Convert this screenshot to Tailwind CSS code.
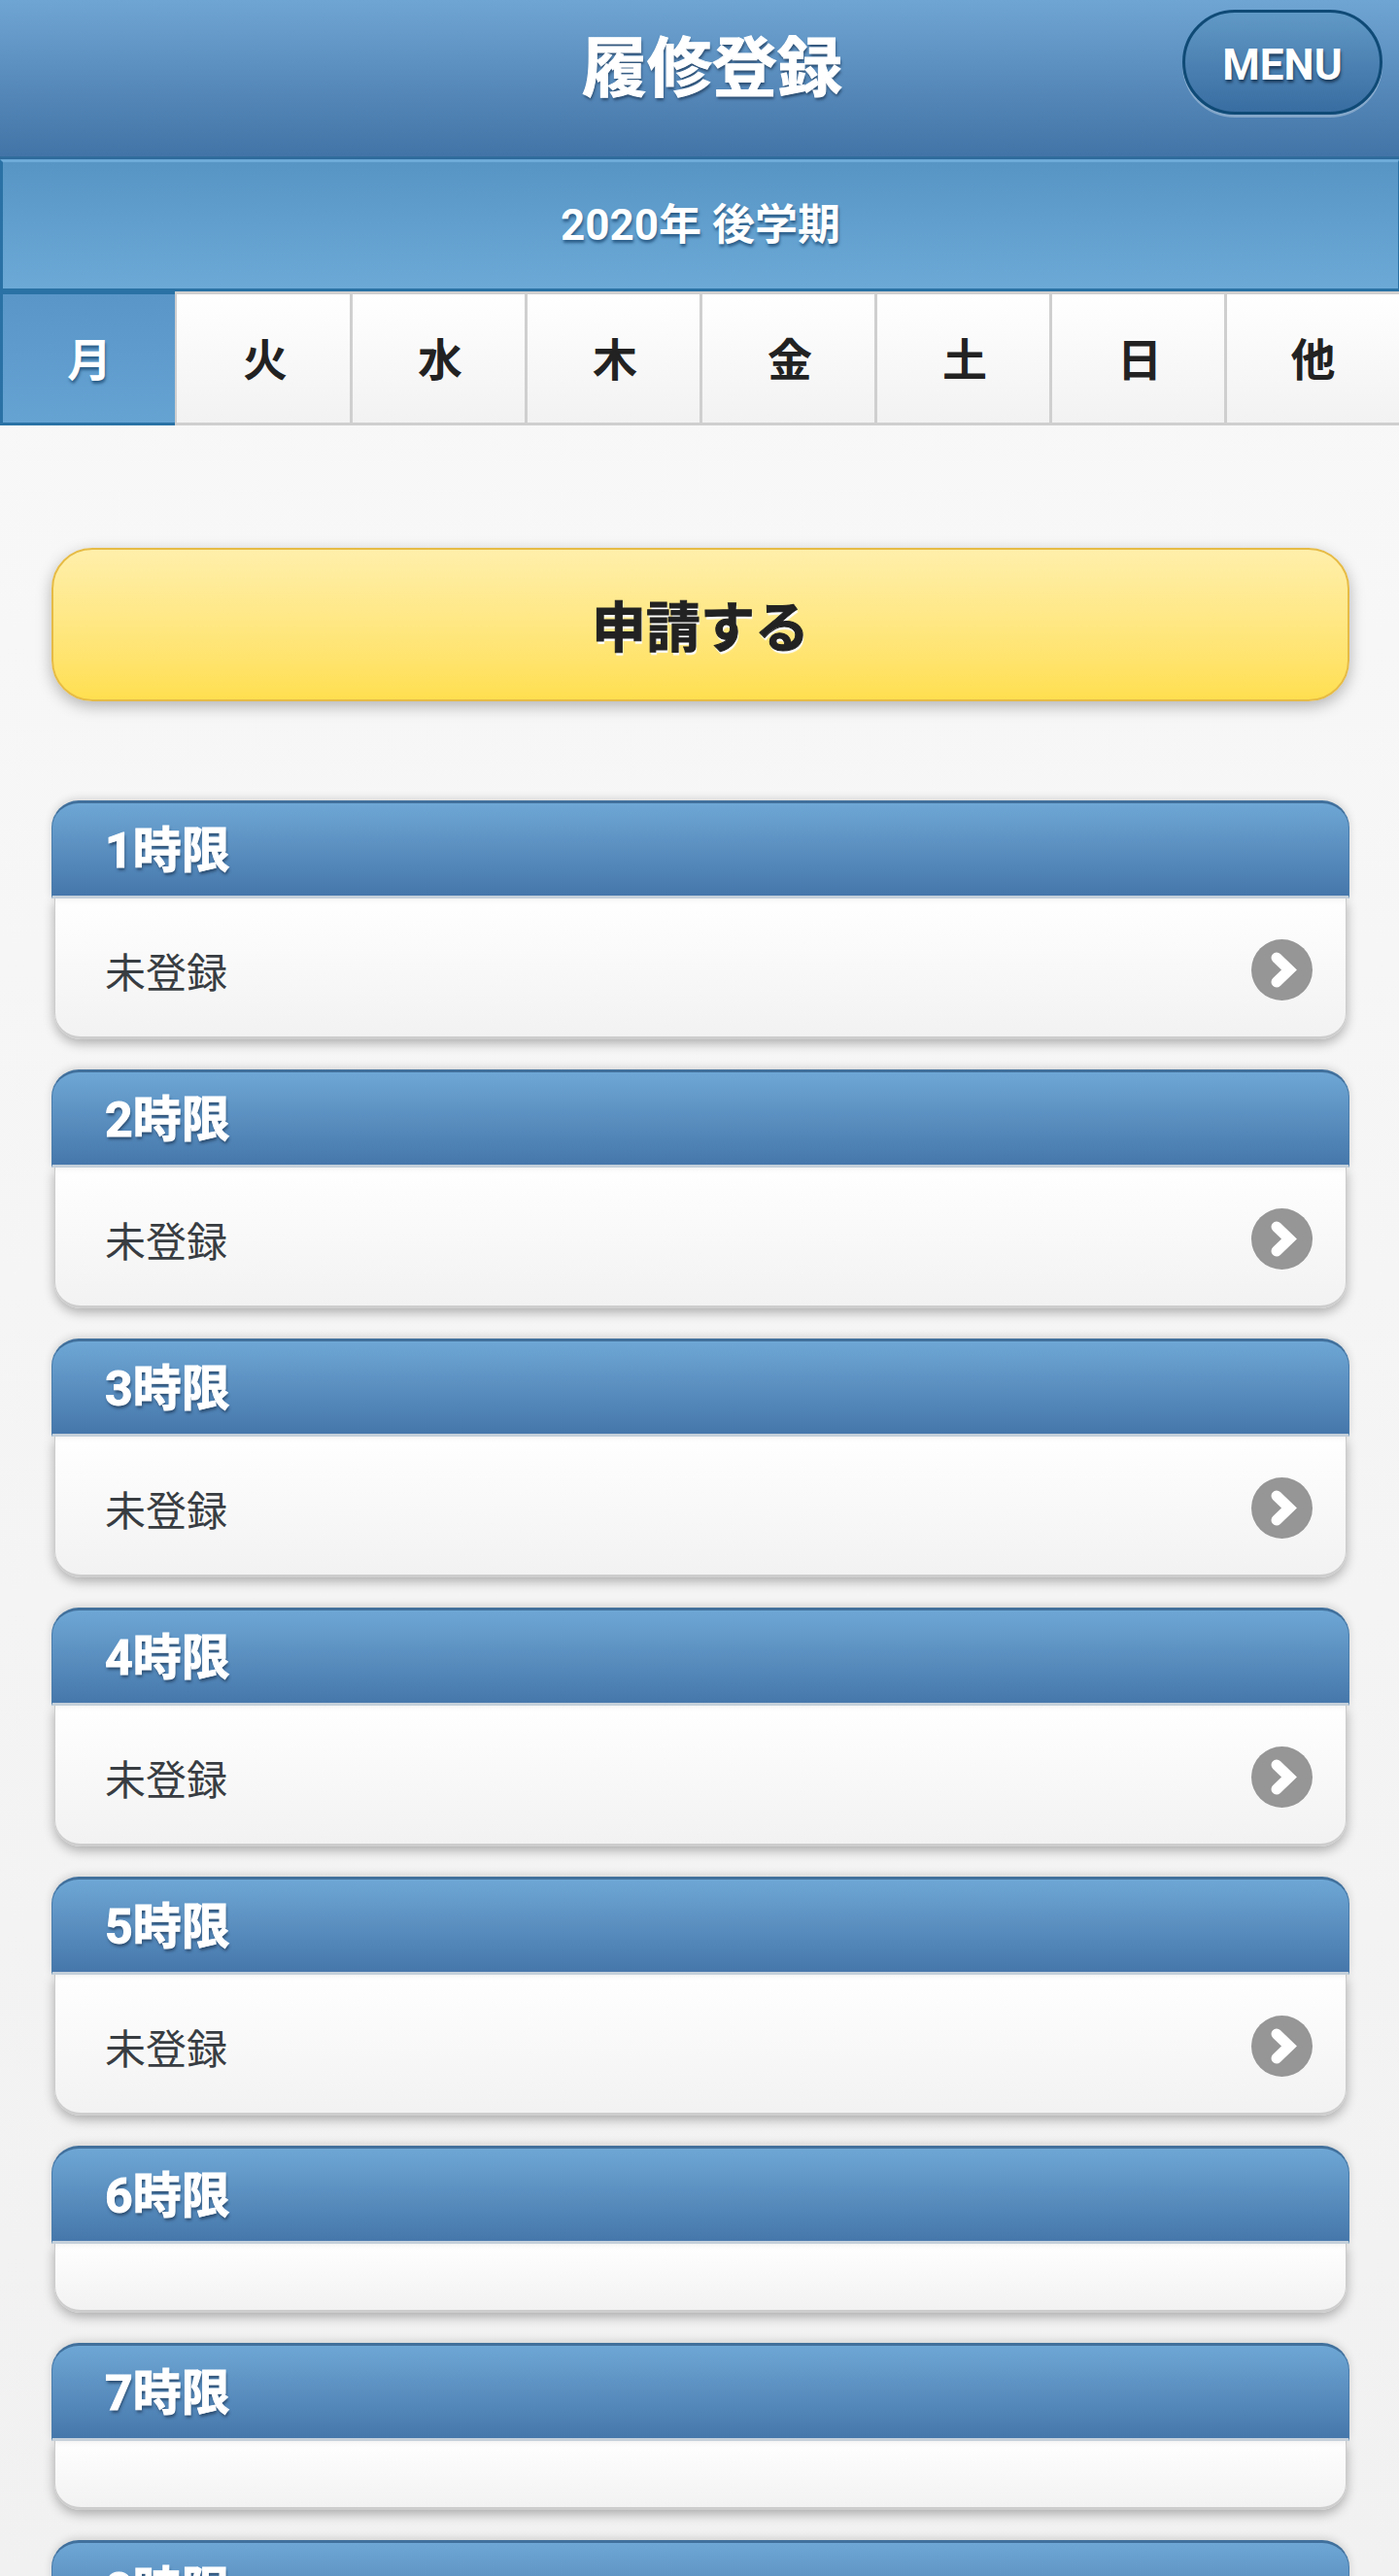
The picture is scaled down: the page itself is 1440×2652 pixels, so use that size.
<!DOCTYPE html>
<html lang="ja">
<head>
<meta charset="utf-8">
<title>履修登録</title>
<script src="https://cdn.jsdelivr.net/npm/@tailwindcss/browser@4"></script>
</head>
<body class="h-[2652px] overflow-hidden bg-gradient-to-b from-[#f9f9f9] to-[#f1f1f1] font-[Roboto,'Noto_Sans_CJK_JP',sans-serif]">
<header class="relative flex h-[164px] items-center justify-center border-b-[3px] border-[#2f6c9c] bg-gradient-to-b from-[#6fa5d3] to-[#4374a7] pb-[18px] pl-[26px]">
  <h1 class="text-[67px] font-bold text-white [-webkit-text-stroke:1px_#fff] [text-shadow:1px_3px_3px_#2d4f73]">履修登録</h1>
  <button class="absolute right-[17px] top-[10px] flex h-[108px] w-[206px] items-center justify-center rounded-[54px] border-[3px] border-[#0f4a76] bg-gradient-to-b from-[#6199c6] to-[#386da1] pt-[5px] text-[44px] font-bold text-white shadow-[0_3px_0_rgba(255,255,255,0.3)] [text-shadow:1px_3px_3px_#1f3f60]">MENU</button>
</header>
<div class="flex h-[136px] items-center justify-center border-y-[3px] border-l-[3px] border-r-[1px] border-l-[#2a72a5] border-r-[#2a72a5] border-t-[#6eabd9] border-b-[#2a72a5] bg-gradient-to-b from-[#5795c5] to-[#6ca9d7] text-[44px] font-bold text-white [text-shadow:1px_3px_3px_#2d5f8a]">2020年 後学期</div>
<nav class="grid h-[138px] grid-cols-8 text-[46px] font-bold text-[#222]">
  <div class="flex items-center justify-center border-y-[3px] border-l-[3px] border-y-[#2a72a5] border-l-[#2a72a5] bg-gradient-to-b from-[#5a96c8] to-[#65a3d3] pl-[1px] pt-[5px] text-white [text-shadow:1px_3px_3px_#2d5f8a]">月</div>
  <div class="flex items-center justify-center border-y-[3px] border-l-[2px] border-y-[#cfcfcf] border-l-[#cfcfcf] bg-gradient-to-b from-white to-[#f2f2f2] pl-[4px] pt-[5px]">火</div>
  <div class="flex items-center justify-center border-y-[3px] border-l-[3px] border-y-[#cfcfcf] border-l-[#cfcfcf] bg-gradient-to-b from-white to-[#f2f2f2] pl-[3px] pt-[5px]">水</div>
  <div class="flex items-center justify-center border-y-[3px] border-l-[3px] border-y-[#cfcfcf] border-l-[#cfcfcf] bg-gradient-to-b from-white to-[#f2f2f2] pl-[3px] pt-[5px]">木</div>
  <div class="flex items-center justify-center border-y-[3px] border-l-[3px] border-y-[#cfcfcf] border-l-[#cfcfcf] bg-gradient-to-b from-white to-[#f2f2f2] pl-[3px] pt-[5px]">金</div>
  <div class="flex items-center justify-center border-y-[3px] border-l-[3px] border-y-[#cfcfcf] border-l-[#cfcfcf] bg-gradient-to-b from-white to-[#f2f2f2] pl-[3px] pt-[5px]">土</div>
  <div class="flex items-center justify-center border-y-[3px] border-l-[3px] border-y-[#cfcfcf] border-l-[#cfcfcf] bg-gradient-to-b from-white to-[#f2f2f2] pl-[3px] pt-[5px]">日</div>
  <div class="flex items-center justify-center border-y-[3px] border-l-[3px] border-y-[#cfcfcf] border-l-[#cfcfcf] bg-gradient-to-b from-white to-[#f2f2f2] pt-[5px]">他</div>
</nav>
<main class="pl-[53px] pr-[51px] pt-[126px]">
  <button class="flex h-[158px] w-full items-center justify-center rounded-[42px] border-[2px] border-[#e6bb45] bg-gradient-to-b from-[#ffefaa] to-[#ffdf4f] pt-[8px] text-[56px] font-bold text-[#222] shadow-[0_5px_16px_rgba(0,0,0,0.28)] [-webkit-text-stroke:1px_#222] [text-shadow:1px_3px_1px_#fff]">申請する</button>

  <section class="mt-[102px]">
    <h2 class="relative z-10 flex h-[101px] items-center rounded-t-[28px] border-x-[1px] border-t-[3px] border-b-[3px] border-x-[#4a7dab] border-t-[#41709c] border-b-[#c4d0da] bg-gradient-to-b from-[#6ea7d5] to-[#4677ab] pl-[54px] pt-[4px] text-[50px] font-bold text-white shadow-[0_-2px_8px_rgba(0,0,0,0.14)] [-webkit-text-stroke:1px_#fff] [text-shadow:1px_3px_3px_#2d4f73]">1時限</h2>
    <div class="mx-[3px] flex h-[145px] items-center justify-between rounded-b-[27px] border-x-[1px] border-b-[3px] border-[#cdcdcd] bg-gradient-to-b from-white to-[#f2f2f2] pl-[51px] pr-[34px] pt-[4px] text-[42px] text-[#383d42] shadow-[0_4px_12px_rgba(0,0,0,0.3)]">
      <span class="pt-[8px]">未登録</span>
      <svg class="h-[63px] w-[63px]" viewBox="0 0 63 63"><circle cx="31.5" cy="31.5" r="31.5" fill="#969696"/><path d="M26 19 L39 31.5 L26 44" fill="none" stroke="#fff" stroke-width="11" stroke-linecap="round" stroke-linejoin="miter"/></svg>
    </div>
  </section>
  <section class="mt-[31px]">
    <h2 class="relative z-10 flex h-[101px] items-center rounded-t-[28px] border-x-[1px] border-t-[3px] border-b-[3px] border-x-[#4a7dab] border-t-[#41709c] border-b-[#c4d0da] bg-gradient-to-b from-[#6ea7d5] to-[#4677ab] pl-[54px] pt-[4px] text-[50px] font-bold text-white shadow-[0_-2px_8px_rgba(0,0,0,0.14)] [-webkit-text-stroke:1px_#fff] [text-shadow:1px_3px_3px_#2d4f73]">2時限</h2>
    <div class="mx-[3px] flex h-[145px] items-center justify-between rounded-b-[27px] border-x-[1px] border-b-[3px] border-[#cdcdcd] bg-gradient-to-b from-white to-[#f2f2f2] pl-[51px] pr-[34px] pt-[4px] text-[42px] text-[#383d42] shadow-[0_4px_12px_rgba(0,0,0,0.3)]">
      <span class="pt-[8px]">未登録</span>
      <svg class="h-[63px] w-[63px]" viewBox="0 0 63 63"><circle cx="31.5" cy="31.5" r="31.5" fill="#969696"/><path d="M26 19 L39 31.5 L26 44" fill="none" stroke="#fff" stroke-width="11" stroke-linecap="round" stroke-linejoin="miter"/></svg>
    </div>
  </section>
  <section class="mt-[31px]">
    <h2 class="relative z-10 flex h-[101px] items-center rounded-t-[28px] border-x-[1px] border-t-[3px] border-b-[3px] border-x-[#4a7dab] border-t-[#41709c] border-b-[#c4d0da] bg-gradient-to-b from-[#6ea7d5] to-[#4677ab] pl-[54px] pt-[4px] text-[50px] font-bold text-white shadow-[0_-2px_8px_rgba(0,0,0,0.14)] [-webkit-text-stroke:1px_#fff] [text-shadow:1px_3px_3px_#2d4f73]">3時限</h2>
    <div class="mx-[3px] flex h-[145px] items-center justify-between rounded-b-[27px] border-x-[1px] border-b-[3px] border-[#cdcdcd] bg-gradient-to-b from-white to-[#f2f2f2] pl-[51px] pr-[34px] pt-[4px] text-[42px] text-[#383d42] shadow-[0_4px_12px_rgba(0,0,0,0.3)]">
      <span class="pt-[8px]">未登録</span>
      <svg class="h-[63px] w-[63px]" viewBox="0 0 63 63"><circle cx="31.5" cy="31.5" r="31.5" fill="#969696"/><path d="M26 19 L39 31.5 L26 44" fill="none" stroke="#fff" stroke-width="11" stroke-linecap="round" stroke-linejoin="miter"/></svg>
    </div>
  </section>
  <section class="mt-[31px]">
    <h2 class="relative z-10 flex h-[101px] items-center rounded-t-[28px] border-x-[1px] border-t-[3px] border-b-[3px] border-x-[#4a7dab] border-t-[#41709c] border-b-[#c4d0da] bg-gradient-to-b from-[#6ea7d5] to-[#4677ab] pl-[54px] pt-[4px] text-[50px] font-bold text-white shadow-[0_-2px_8px_rgba(0,0,0,0.14)] [-webkit-text-stroke:1px_#fff] [text-shadow:1px_3px_3px_#2d4f73]">4時限</h2>
    <div class="mx-[3px] flex h-[145px] items-center justify-between rounded-b-[27px] border-x-[1px] border-b-[3px] border-[#cdcdcd] bg-gradient-to-b from-white to-[#f2f2f2] pl-[51px] pr-[34px] pt-[4px] text-[42px] text-[#383d42] shadow-[0_4px_12px_rgba(0,0,0,0.3)]">
      <span class="pt-[8px]">未登録</span>
      <svg class="h-[63px] w-[63px]" viewBox="0 0 63 63"><circle cx="31.5" cy="31.5" r="31.5" fill="#969696"/><path d="M26 19 L39 31.5 L26 44" fill="none" stroke="#fff" stroke-width="11" stroke-linecap="round" stroke-linejoin="miter"/></svg>
    </div>
  </section>
  <section class="mt-[31px]">
    <h2 class="relative z-10 flex h-[101px] items-center rounded-t-[28px] border-x-[1px] border-t-[3px] border-b-[3px] border-x-[#4a7dab] border-t-[#41709c] border-b-[#c4d0da] bg-gradient-to-b from-[#6ea7d5] to-[#4677ab] pl-[54px] pt-[4px] text-[50px] font-bold text-white shadow-[0_-2px_8px_rgba(0,0,0,0.14)] [-webkit-text-stroke:1px_#fff] [text-shadow:1px_3px_3px_#2d4f73]">5時限</h2>
    <div class="mx-[3px] flex h-[145px] items-center justify-between rounded-b-[27px] border-x-[1px] border-b-[3px] border-[#cdcdcd] bg-gradient-to-b from-white to-[#f2f2f2] pl-[51px] pr-[34px] pt-[4px] text-[42px] text-[#383d42] shadow-[0_4px_12px_rgba(0,0,0,0.3)]">
      <span class="pt-[8px]">未登録</span>
      <svg class="h-[63px] w-[63px]" viewBox="0 0 63 63"><circle cx="31.5" cy="31.5" r="31.5" fill="#969696"/><path d="M26 19 L39 31.5 L26 44" fill="none" stroke="#fff" stroke-width="11" stroke-linecap="round" stroke-linejoin="miter"/></svg>
    </div>
  </section>
  <section class="mt-[31px]">
    <h2 class="relative z-10 flex h-[101px] items-center rounded-t-[28px] border-x-[1px] border-t-[3px] border-b-[3px] border-x-[#4a7dab] border-t-[#41709c] border-b-[#c4d0da] bg-gradient-to-b from-[#6ea7d5] to-[#4677ab] pl-[54px] pt-[4px] text-[50px] font-bold text-white shadow-[0_-2px_8px_rgba(0,0,0,0.14)] [-webkit-text-stroke:1px_#fff] [text-shadow:1px_3px_3px_#2d4f73]">6時限</h2>
    <div class="mx-[3px] h-[71px] rounded-b-[27px] border-x-[1px] border-b-[3px] border-[#cdcdcd] bg-gradient-to-b from-white to-[#f2f2f2] shadow-[0_4px_12px_rgba(0,0,0,0.3)]"></div>
  </section>
  <section class="mt-[31px]">
    <h2 class="relative z-10 flex h-[101px] items-center rounded-t-[28px] border-x-[1px] border-t-[3px] border-b-[3px] border-x-[#4a7dab] border-t-[#41709c] border-b-[#c4d0da] bg-gradient-to-b from-[#6ea7d5] to-[#4677ab] pl-[54px] pt-[4px] text-[50px] font-bold text-white shadow-[0_-2px_8px_rgba(0,0,0,0.14)] [-webkit-text-stroke:1px_#fff] [text-shadow:1px_3px_3px_#2d4f73]">7時限</h2>
    <div class="mx-[3px] h-[71px] rounded-b-[27px] border-x-[1px] border-b-[3px] border-[#cdcdcd] bg-gradient-to-b from-white to-[#f2f2f2] shadow-[0_4px_12px_rgba(0,0,0,0.3)]"></div>
  </section>
  <section class="mt-[31px]">
    <h2 class="relative z-10 flex h-[101px] items-center rounded-t-[28px] border-x-[1px] border-t-[3px] border-b-[3px] border-x-[#4a7dab] border-t-[#41709c] border-b-[#c4d0da] bg-gradient-to-b from-[#6ea7d5] to-[#4677ab] pl-[54px] pt-[4px] text-[50px] font-bold text-white shadow-[0_-2px_8px_rgba(0,0,0,0.14)] [-webkit-text-stroke:1px_#fff] [text-shadow:1px_3px_3px_#2d4f73]">8時限</h2>
    <div class="mx-[3px] h-[71px] rounded-b-[27px] border-x-[1px] border-b-[3px] border-[#cdcdcd] bg-gradient-to-b from-white to-[#f2f2f2] shadow-[0_4px_12px_rgba(0,0,0,0.3)]"></div>
  </section>
</main>
</body>
</html>
